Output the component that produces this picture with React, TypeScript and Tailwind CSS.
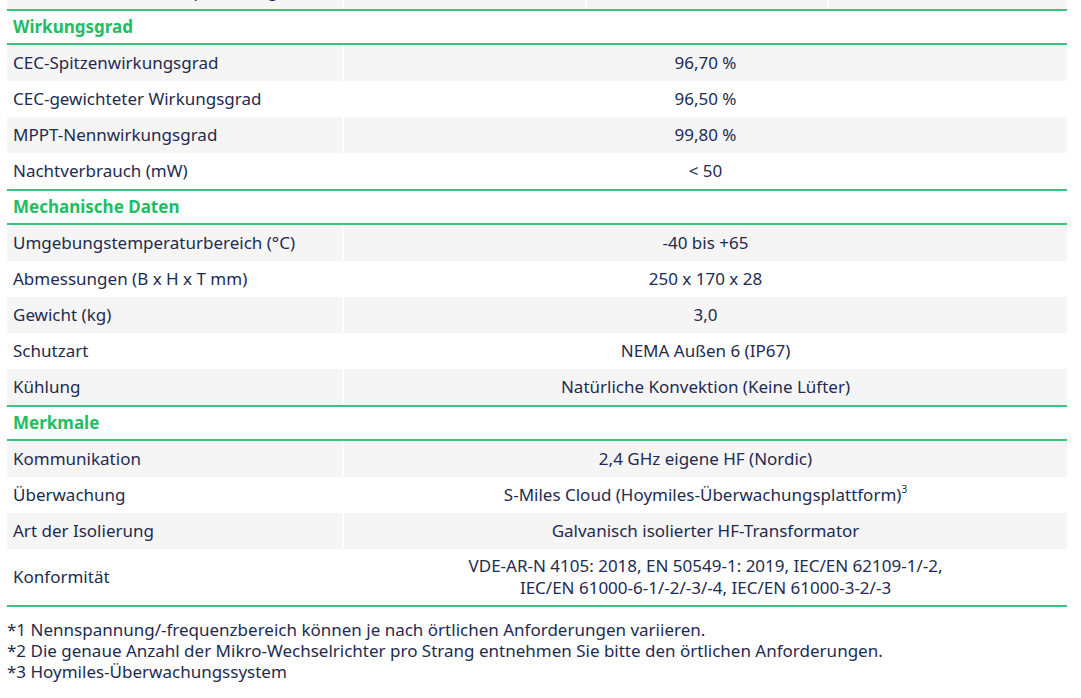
import React from 'react'

type Row = { label: string; value: React.ReactNode; tall?: boolean }
type Section = { title: string; rows: Row[] }

const sections: Section[] = [
  {
    title: 'Wirkungsgrad',
    rows: [
      { label: 'CEC-Spitzenwirkungsgrad', value: '96,70 %' },
      { label: 'CEC-gewichteter Wirkungsgrad', value: '96,50 %' },
      { label: 'MPPT-Nennwirkungsgrad', value: '99,80 %' },
      { label: 'Nachtverbrauch (mW)', value: '< 50' },
    ],
  },
  {
    title: 'Mechanische Daten',
    rows: [
      { label: 'Umgebungstemperaturbereich (°C)', value: '-40 bis +65' },
      { label: 'Abmessungen (B x H x T mm)', value: '250 x 170 x 28' },
      { label: 'Gewicht (kg)', value: '3,0' },
      { label: 'Schutzart', value: 'NEMA Außen 6 (IP67)' },
      { label: 'Kühlung', value: 'Natürliche Konvektion (Keine Lüfter)' },
    ],
  },
  {
    title: 'Merkmale',
    rows: [
      { label: 'Kommunikation', value: '2,4 GHz eigene HF (Nordic)' },
      {
        label: 'Überwachung',
        value: (
          <>
            S-Miles Cloud (Hoymiles-Überwachungsplattform)
            <sup className="relative -top-[8px] text-[10px]">3</sup>
          </>
        ),
      },
      { label: 'Art der Isolierung', value: 'Galvanisch isolierter HF-Transformator' },
      {
        label: 'Konformität',
        value: (
          <>
            VDE-AR-N 4105: 2018, EN 50549-1: 2019, IEC/EN 62109-1/-2,
            <br />
            IEC/EN 61000-6-1/-2/-3/-4, IEC/EN 61000-3-2/-3
          </>
        ),
        tall: true,
      },
    ],
  },
]

const footnotes = [
  '*1 Nennspannung/-frequenzbereich können je nach örtlichen Anforderungen variieren.',
  '*2 Die genaue Anzahl der Mikro-Wechselrichter pro Strang entnehmen Sie bitte den örtlichen Anforderungen.',
  '*3 Hoymiles-Überwachungssystem',
]

export default function App() {
  return (
    <div
      className="min-h-[698px] w-[1081px] overflow-hidden bg-white text-[17px] text-[#1e2b50]"
      style={{ fontFamily: '"Noto Sans", "Open Sans", sans-serif' }}
    >
      <div className="ml-[7px] w-[1060px]">
        {/* previous row, only its bottom edge is visible */}
        <div className="-mt-[27px] grid h-[36px] grid-cols-[335px_241px_240px_1fr] gap-x-[2px]">
          <div className="bg-[#f5f5f5] pl-[6px] leading-[36px]">Max. Anzahl Einheiten pro Strang</div>
          <div className="bg-[#f5f5f5] text-center leading-[36px]">10</div>
          <div className="bg-[#f5f5f5] text-center leading-[36px]">8</div>
          <div className="bg-[#f5f5f5] text-center leading-[36px]">7</div>
        </div>

        {sections.map((section) => (
          <div key={section.title}>
            <div className="flex h-[36px] items-center border-y-2 border-[#3cc27c] pl-[6px] font-bold text-[#22bd63]">
              {section.title}
            </div>
            {section.rows.map((row, i) => {
              const bg = i % 2 === 0 ? 'bg-[#f5f5f5]' : 'bg-white'
              return (
                <div
                  key={row.label}
                  className={`grid grid-cols-[335px_1fr] gap-x-[2px] ${row.tall ? 'h-[56px]' : 'h-[36px]'}`}
                >
                  <div className={`flex items-center pl-[6px] ${bg}`}>{row.label}</div>
                  <div className={`flex items-center justify-center text-center leading-[22px] ${bg}`}>
                    <span>{row.value}</span>
                  </div>
                </div>
              )
            })}
          </div>
        ))}
        <div className="h-[2px] bg-[#3cc27c]"></div>
      </div>

      <div className="mt-[12px] pl-[7px] leading-[21px]">
        {footnotes.map((note) => (
          <div key={note}>{note}</div>
        ))}
      </div>
    </div>
  )
}
